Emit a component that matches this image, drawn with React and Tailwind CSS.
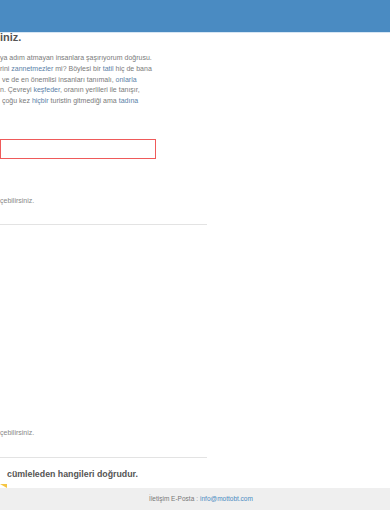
export default function App() {
  const font = { fontFamily: '"Liberation Sans", Arial, sans-serif' }
  return (
    <div className="w-[390px] h-[510px] bg-white overflow-hidden flex flex-col" style={font}>
      {/* Header */}
      <header className="h-[32px] bg-[#4a8bc2] shrink-0" />
      <div className="h-[1px] bg-[#d6e6f4] shrink-0" />

      <main className="flex-1 flex flex-col">
        <h2 className="text-[11px] font-bold text-[#555] leading-[8px]">iniz.</h2>

        <div className="mt-[12px] text-[7px] leading-[10.8px] text-[#7a7a7a] whitespace-nowrap">
          <p>ya adım atmayan insanlara şaşırıyorum doğrusu.</p>
          <p>
            rini <span className="text-[#5b7fa8]">zannetmezler</span> mi? Böylesi bir{' '}
            <span className="text-[#5b7fa8]">tatil</span> hiç de bana
          </p>
          <p>
            &nbsp;ve de en önemlisi insanları tanımalı, <span className="text-[#5b7fa8]">onlarla</span>
          </p>
          <p>
            n. Çevreyi <span className="text-[#5b7fa8]">keşfeder</span>, oranın yerlileri ile tanışır,
          </p>
          <p>
            &nbsp;çoğu kez <span className="text-[#5b7fa8]">hiçbir</span> turistin gitmediği ama{' '}
            <span className="text-[#5b7fa8]">tadına</span>
          </p>
        </div>

        {/* Input with error */}
        <div className="mt-[32px] w-[156px] h-[20px] border-[1.5px] border-[#ef5a5a]" />

        <p className="mt-[37px] text-[7px] text-[#888]">çebilirsiniz.</p>
        <div className="mt-[18px] w-[207px] border-t border-[#e3e3e3]" />

        <p className="mt-[203px] text-[7px] text-[#888]">çebilirsiniz.</p>
        <div className="mt-[18px] w-[207px] border-t border-[#e3e3e3]" />

        <h3 className="mt-[10px] ml-[7px] text-[8.8px] font-bold text-[#555] leading-[12px]">
          cümleleden hangileri doğrudur.
        </h3>
        <div className="mt-auto w-0 h-0 border-l-[7px] border-l-transparent border-r-0 border-t-[4px] border-t-[#f5c542]" />
      </main>

      {/* Footer */}
      <footer className="h-[22px] shrink-0 bg-[#efefef] flex items-center justify-center text-[6.5px]">
        <span className="ml-[12px] text-[#777]">İletişim E-Posta</span>
        <span className="text-[#999] mx-[2px]">:</span>
        <span className="text-[#4a8bc2]">info@mottobt.com</span>
      </footer>
    </div>
  )
}
